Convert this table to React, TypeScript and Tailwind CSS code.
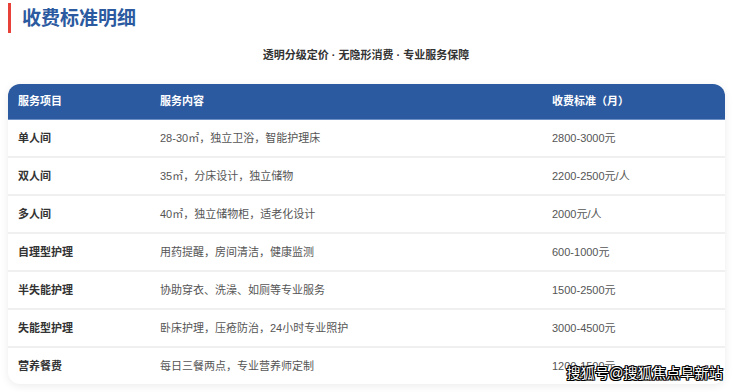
import React from "react";

const rows = [
  { name: "单人间", desc: "28-30㎡，独立卫浴，智能护理床", price: "2800-3000元" },
  { name: "双人间", desc: "35㎡，分床设计，独立储物", price: "2200-2500元/人" },
  { name: "多人间", desc: "40㎡，独立储物柜，适老化设计", price: "2000元/人" },
  { name: "自理型护理", desc: "用药提醒，房间清洁，健康监测", price: "600-1000元" },
  { name: "半失能护理", desc: "协助穿衣、洗澡、如厕等专业服务", price: "1500-2500元" },
  { name: "失能型护理", desc: "卧床护理，压疮防治，24小时专业照护", price: "3000-4500元" },
  { name: "营养餐费", desc: "每日三餐两点，专业营养师定制", price: "1200-1500元" },
];

const font = { fontFamily: "'Liberation Sans', 'Noto Sans CJK SC', sans-serif" };

export default function App() {
  return (
    <div className="w-[740px] h-[392px] bg-white overflow-hidden relative" style={font}>
      <div className="pt-[3px] pl-2">
        <div className="h-[30px] border-l-[3px] border-[#e8413a] pl-[11px] flex items-center">
          <h1 className="text-[19px] font-bold text-[#2b5aa0] leading-none">收费标准明细</h1>
        </div>
      </div>

      <p className="mt-[15px] pr-[8px] text-center text-[11px] font-bold text-[#333] leading-[14px]">
        透明分级定价 · 无隐形消费 · 专业服务保障
      </p>

      <div className="mt-[22px] ml-2 w-[717px] rounded-[12px] bg-white shadow-[0_2px_8px_rgba(0,0,0,0.08)] overflow-hidden">
        <div className="flex h-[36px] items-center bg-[#2c5aa0] border-b border-[#6d8fc4] text-[11px] font-bold text-white">
          <div className="w-[152px] pl-[10px]">服务项目</div>
          <div className="w-[392px]">服务内容</div>
          <div className="flex-1">收费标准（月）</div>
        </div>
        {rows.map((r, i) => (
          <div
            key={r.name}
            className={
              i < rows.length - 1
                ? "flex h-[38px] items-center border-b-2 border-[#f0f0f0] text-[11px]"
                : "flex h-[36px] items-center text-[11px]"
            }
          >
            <div className="w-[152px] pl-[10px] font-bold text-[#333]">{r.name}</div>
            <div className="w-[392px] text-[#555]">{r.desc}</div>
            <div className="flex-1 text-[#555]">{r.price}</div>
          </div>
        ))}
      </div>

      <div
        className="absolute right-[17px] bottom-[12px] text-[14px] text-white leading-none tracking-[0.2px]"
        style={{ ...font, textShadow: "1px 0 #000, -1px 0 #000, 0 1px #000, 0 -1px #000, 1px 1px #000, -1px -1px #000, 1px -1px #000, -1px 1px #000" }}
      >
        搜狐号@搜狐焦点阜新站
      </div>
    </div>
  );
}
